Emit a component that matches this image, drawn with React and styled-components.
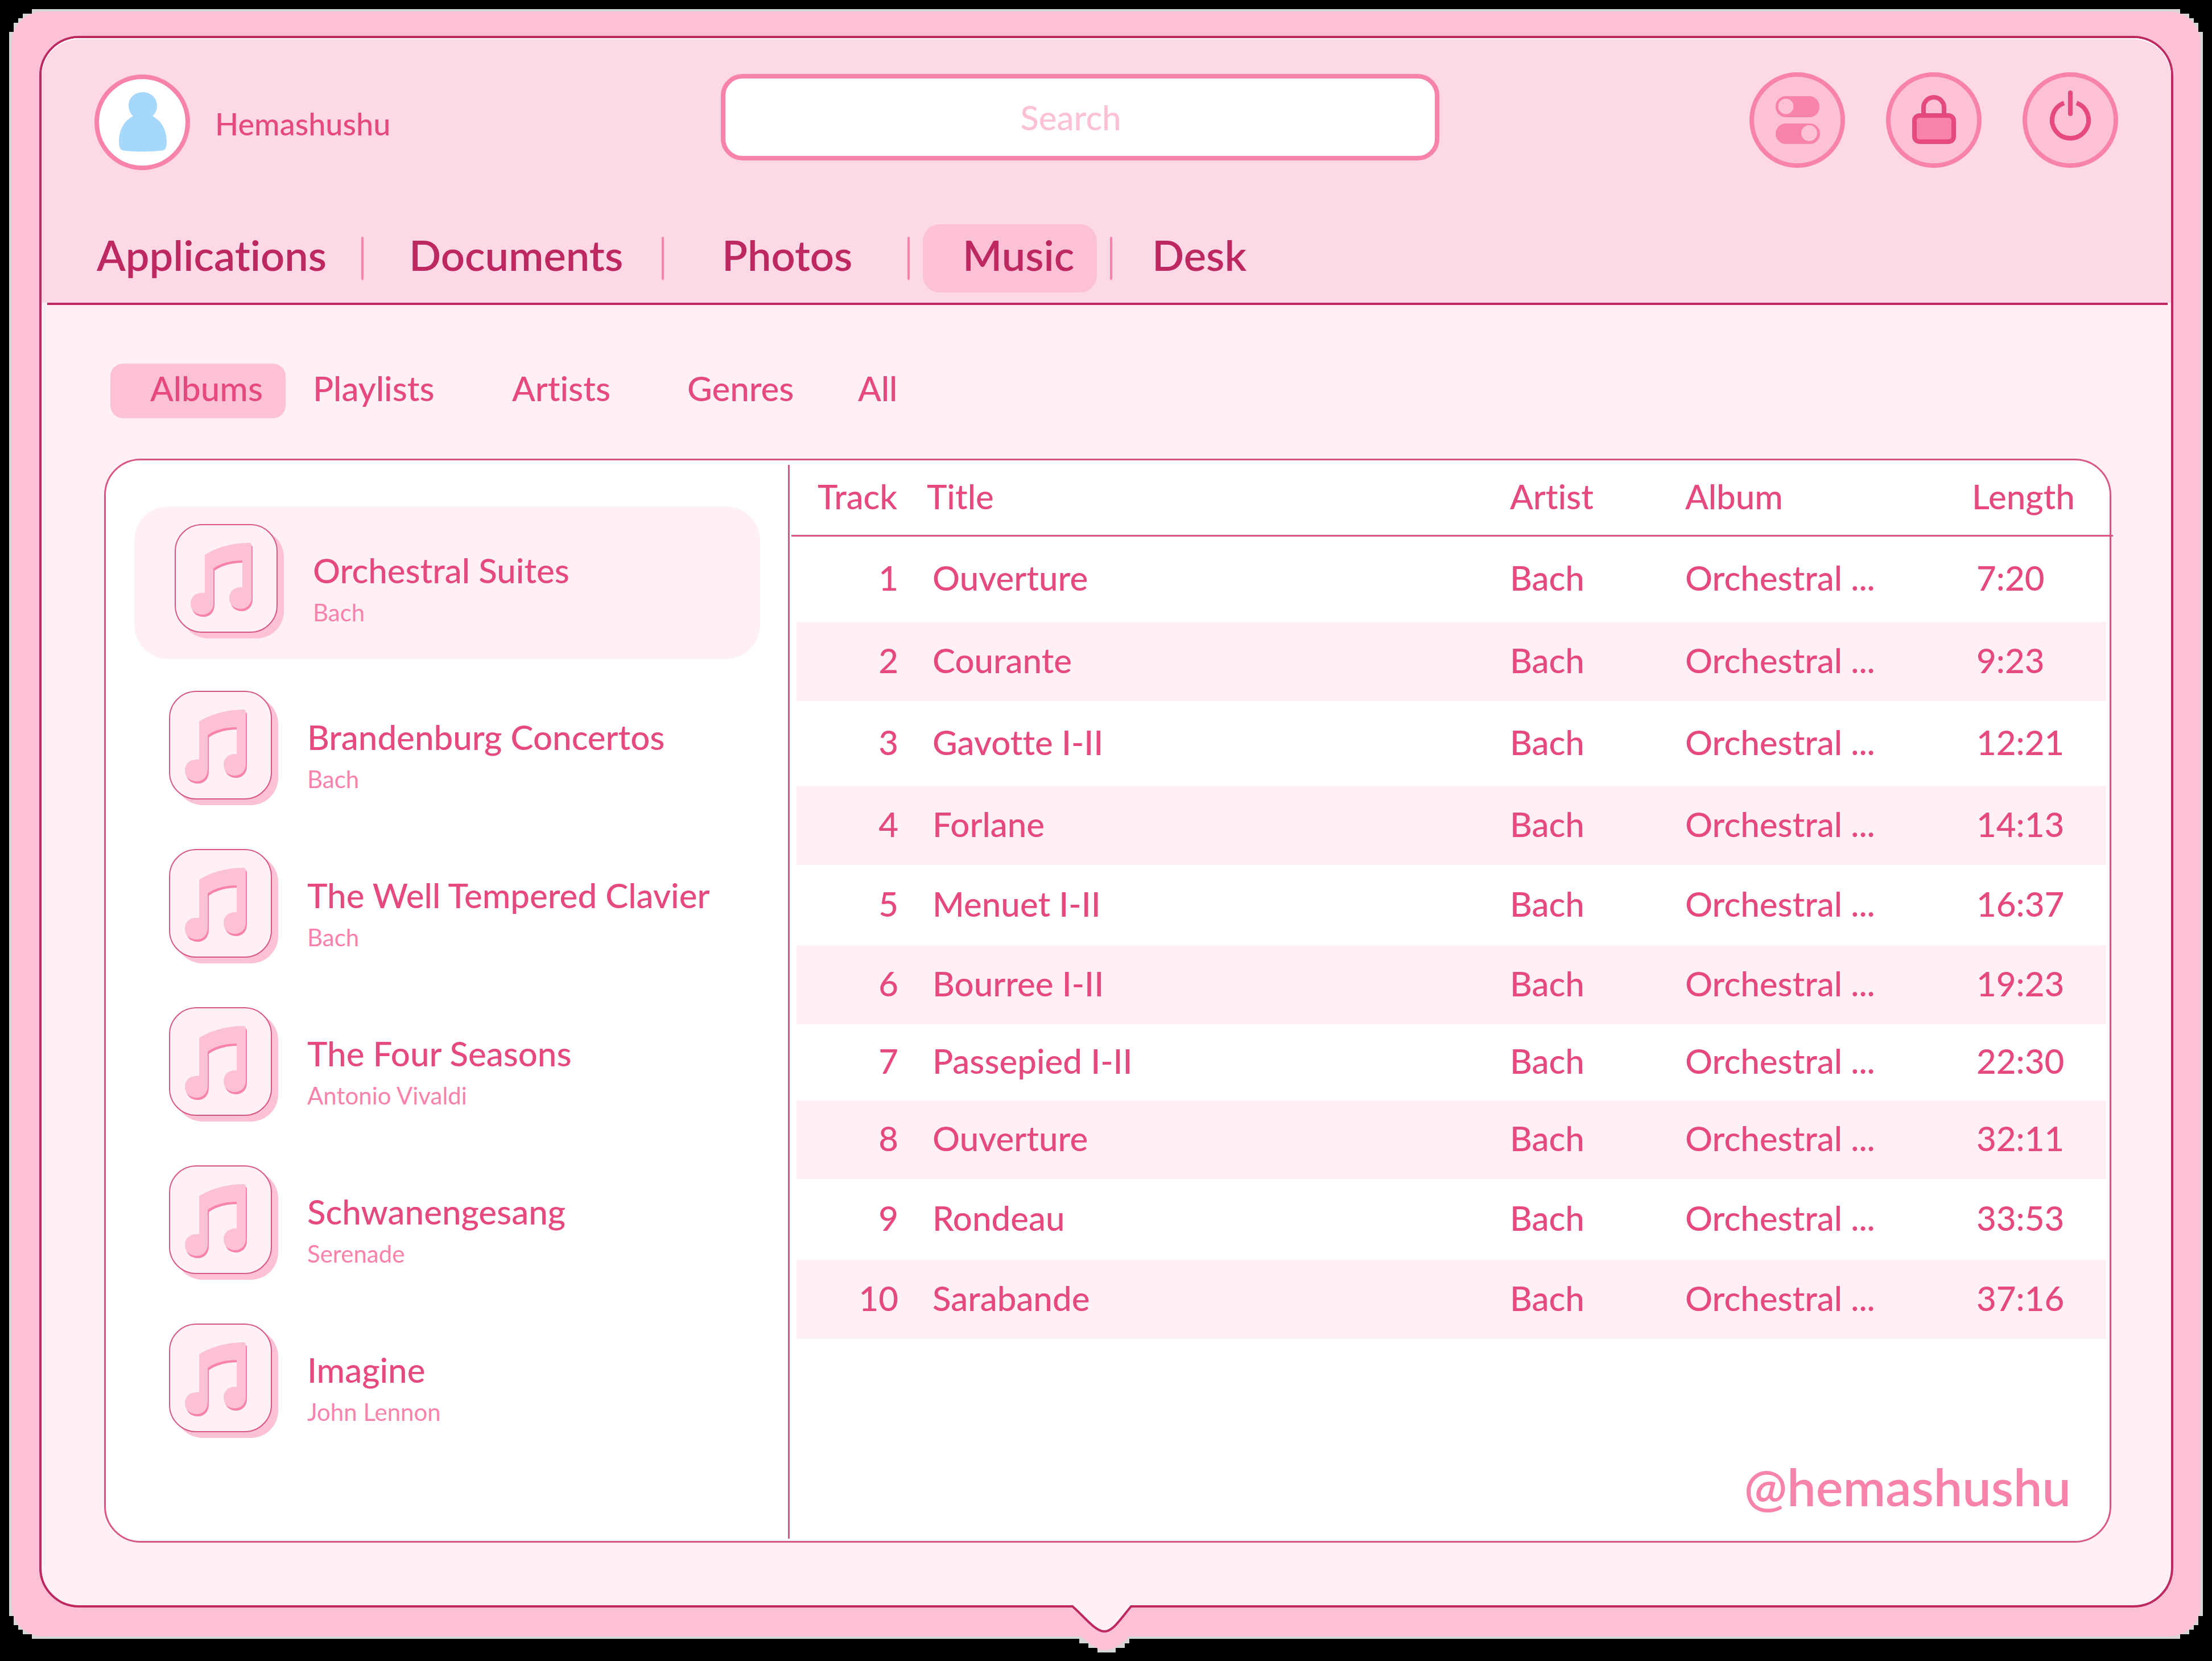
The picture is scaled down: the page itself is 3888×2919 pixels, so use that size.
import React, { useState } from "react";
import styled, { createGlobalStyle, css } from "styled-components";

const color = {
  crimson: "#bd285f",
  rose: "#e5497f",
  roseLine: "#d85585",
  pink: "#f782ab",
  blush: "#fcc1d7",
  petal: "#fdd9e7",
  mist: "#fef0f5",
  edge: "#d6d6d6",
  sky: "#a6d8fe",
};

const GlobalStyle = createGlobalStyle`
  *, *::before, *::after { box-sizing: border-box; }
  html, body { margin: 0; background: #000; }
  body {
    font-family: Lato, "Liberation Sans", sans-serif;
    font-weight: 500;
    font-variant-ligatures: none;
    color: ${color.rose};
  }
  button, input { font: inherit; font-variant-ligatures: none; color: inherit; }
  button { border: 0; padding: 0; background: none; cursor: pointer; text-align: left; }
  ul { list-style: none; margin: 0; padding: 0; }
`;

const Desktop = styled.div`
  display: flex;
  min-height: 100vh;
  padding: 16px 16px 39px;
`;

const Frame = styled.div`
  flex: 1;
  display: flex;
  background: ${color.edge};
  clip-path: polygon(
    0 40px, 8px 40px, 8px 24px, 16px 24px, 16px 16px, 24px 16px, 24px 8px, 40px 8px, 40px 0,
    calc(100% - 40px) 0, calc(100% - 40px) 8px, calc(100% - 24px) 8px, calc(100% - 24px) 16px,
    calc(100% - 16px) 16px, calc(100% - 16px) 24px, calc(100% - 8px) 24px, calc(100% - 8px) 40px, 100% 40px,
    100% calc(100% - 40px), calc(100% - 8px) calc(100% - 40px), calc(100% - 8px) calc(100% - 24px),
    calc(100% - 16px) calc(100% - 24px), calc(100% - 16px) calc(100% - 16px), calc(100% - 24px) calc(100% - 16px),
    calc(100% - 24px) calc(100% - 8px), calc(100% - 40px) calc(100% - 8px), calc(100% - 40px) 100%,
    calc(50% + 60px) 100%, calc(50% + 60px) calc(100% + 24px), calc(50% - 60px) calc(100% + 24px), calc(50% - 60px) 100%,
    40px 100%, 40px calc(100% - 8px), 24px calc(100% - 8px), 24px calc(100% - 16px), 16px calc(100% - 16px),
    16px calc(100% - 24px), 8px calc(100% - 24px), 8px calc(100% - 40px), 0 calc(100% - 40px)
  );
`;

const Mat = styled.div`
  flex: 1;
  display: flex;
  margin: 4px;
  padding: 43px 48px 51px 49px;
  border-radius: 56px;
  background: ${color.blush};
`;

const Window = styled.main`
  position: relative;
  flex: 1;
  min-width: 0;
  display: flex;
  flex-direction: column;
  border: 4px solid ${color.crimson};
  border-radius: 70px;
  background: ${color.mist};
`;

const Tail = styled.svg`
  position: absolute;
  left: 50%;
  bottom: -87px;
  width: 116px;
  height: 92px;
  margin-left: -62px;
  pointer-events: none;
`;

const Header = styled.header`
  padding: 60px 93px 18px;
  border-radius: 66px 66px 0 0;
  background: ${color.petal};
  box-shadow: inset 0 2px 0 #fff;
`;

const HeaderRule = styled.hr`
  height: 4px;
  margin: 0 6px 0 10px;
  border: 0;
  background: ${color.crimson};
`;

const TopBar = styled.div`
  display: grid;
  grid-template-columns: 1101fr 1263fr 1193fr;
  align-items: start;
`;

const Profile = styled.a`
  display: flex;
  align-items: center;
  gap: 44px;
  padding-top: 4px;
  font-size: 54px;
  line-height: 64px;
  color: inherit;
  text-decoration: none;
`;

const ProfileName = styled.span`
  padding-top: 6px;
`;

const Avatar = styled.svg`
  width: 168px;
  height: 168px;
`;

const SearchField = styled.input`
  width: 100%;
  height: 152px;
  margin-top: 3px;
  padding: 0 44px 0 36px;
  border: 8px solid ${color.pink};
  border-radius: 38px;
  background: #fff;
  outline: 0;
  text-align: center;
  font-size: 60px;
  &::placeholder { color: ${color.blush}; opacity: 1; }
`;

const Actions = styled.div`
  display: flex;
  justify-content: flex-end;
  gap: 72px;
`;

const RoundButton = styled.button`
  width: 168px;
  height: 168px;
  border: 8px solid ${color.pink};
  border-radius: 50%;
  background: ${color.blush};
  svg { display: block; width: 152px; height: 152px; }
`;

const MainNav = styled.nav`
  display: flex;
  align-items: center;
  margin-top: 95px;
`;

const NavDivider = styled.span`
  width: 4px;
  height: 76px;
  border-radius: 2px;
  background: ${color.pink};
`;

const MainTab = styled.button`
  width: ${(p) => p.$width}px;
  height: 120px;
  padding: 0 0 12px ${(p) => p.$inset}px;
  border-radius: 30px;
  font-size: 74px;
  line-height: 92px;
  font-weight: 600;
  white-space: nowrap;
  color: ${color.crimson};
  ${(p) => p.$active && css`
    margin: 0 23px;
    background: ${color.blush};
  `}
`;

const Body = styled.section`
  flex: 1;
  display: flex;
  flex-direction: column;
  padding: 103px 105px 110px 110px;
`;

const SubNav = styled.nav`
  display: flex;
  margin: 0 0 71px 11px;
`;

const SubTab = styled.button`
  width: ${(p) => p.$width}px;
  height: 96px;
  padding: 0 0 10px ${(p) => p.$inset}px;
  border-radius: 22px;
  font-size: 60px;
  line-height: 72px;
  white-space: nowrap;
  background: ${(p) => (p.$active ? color.blush : "none")};
`;

const Panel = styled.div`
  flex: 1;
  display: grid;
  grid-template-columns: 1199px 3px 1fr;
  border: 3px solid ${color.roseLine};
  border-radius: 64px;
  background: #fff;
`;

const PanelDivider = styled.div`
  margin: 8px 0 4px;
  background: ${color.roseLine};
`;

const AlbumList = styled.ul`
  display: flex;
  flex-direction: column;
  gap: 10px;
  padding: 81px 49px 60px 50px;
`;

const AlbumButton = styled.button`
  display: flex;
  align-items: flex-start;
  gap: 64px;
  width: 100%;
  height: 268px;
  padding: 31px 0 0 61px;
  border-radius: 60px;
  ${(p) => p.$active && css`
    margin-bottom: 15px;
    padding-left: 71px;
    background: ${color.mist};
  `}
`;

const Cover = styled.svg`
  flex: none;
  width: 192px;
  height: 201px;
  margin-right: -13px;
`;

const AlbumText = styled.span`
  display: flex;
  flex-direction: column;
  padding-top: 42px;
  white-space: nowrap;
`;

const AlbumTitle = styled.span`
  font-size: 60px;
  line-height: 78px;
`;

const AlbumArtist = styled.span`
  font-size: 42px;
  line-height: 70px;
  font-weight: 400;
  color: ${color.pink};
`;

const Tracks = styled.div`
  display: flex;
  flex-direction: column;
  margin: 0 -6px 0 3px;
`;

const TrackTable = styled.table`
  width: 100%;
  table-layout: fixed;
  border-collapse: separate;
  border-spacing: 0;
  font-size: 60px;
  line-height: 72px;
  text-align: left;
  white-space: nowrap;
`;

const Col = styled.col`
  width: ${(p) => (p.$width ? `${p.$width}px` : "auto")};
`;

const HeadCell = styled.th`
  height: 134px;
  padding: 0 0 6px ${(p) => p.$inset || 0}px;
  border-bottom: 3px solid ${color.roseLine};
  font-weight: 500;
`;

const TrackRow = styled.tr`
  height: ${(p) => p.$height}px;
`;

const Cell = styled.td`
  padding: 0 0 6px ${(p) => p.$inset || 0}px;
  background-clip: padding-box;
  ${TrackRow}:nth-child(even) & { background-color: ${color.mist}; }
  &:first-child {
    padding-right: 50px;
    border-left: 9px solid transparent;
    text-align: right;
  }
  &:last-child { border-right: 12px solid transparent; }
`;

const Signature = styled.a`
  margin: auto 74px 44px auto;
  font-size: 90px;
  line-height: 104px;
  font-weight: 600;
  color: ${color.pink};
  text-decoration: none;
`;

const notePath =
  "M53 54 C72 42 100 33 131 33 Q135 33 135 38 V129 C135 141 127 149 116 149 C104 149 96 141 96 130 C96 118 105 110 119 111 V64 C100 64 82 68 68 78 V138 C68 151 60 159 49 159 C36 159 28 151 28 140 C28 128 37 119 53 121 Z";

function AlbumCover() {
  return (
    <Cover viewBox="0 0 192 201" aria-hidden="true">
      <rect x="11" y="10" width="181" height="191" rx="48" fill={color.blush} />
      <rect x="1" y="1" width="179" height="189" rx="47" fill={color.mist} stroke={color.roseLine} strokeWidth="2" />
      <path d={notePath} fill={color.pink} transform="translate(2 4)" />
      <path d={notePath} fill={color.blush} />
    </Cover>
  );
}

function TogglesIcon() {
  return (
    <svg viewBox="0 0 152 152" aria-hidden="true">
      <rect x="38" y="34" width="77" height="37" rx="18" fill={color.pink} />
      <circle cx="56" cy="52" r="13.5" fill={color.blush} />
      <rect x="38" y="82" width="78" height="36" rx="18" fill={color.pink} />
      <circle cx="97" cy="99" r="14" fill={color.blush} />
    </svg>
  );
}

function LockIcon() {
  return (
    <svg viewBox="0 0 152 152" aria-hidden="true" fill="none" stroke={color.rose} strokeWidth="8">
      <path d="M58 68 V54 A18 18 0 0 1 94 54 V68" />
      <rect x="42" y="68" width="69" height="46" rx="9" fill={color.pink} />
    </svg>
  );
}

function PowerIcon() {
  return (
    <svg viewBox="0 0 152 152" aria-hidden="true" fill="none" stroke={color.rose} strokeWidth="8">
      <path d="M65 46 A32 32 0 1 0 87 46" />
      <path d="M76 28 V65" strokeLinecap="round" />
    </svg>
  );
}

const mainTabs = [
  { name: "Applications", width: 469, inset: 4 },
  { name: "Documents", width: 524, inset: 80 },
  { name: "Photos", width: 428, inset: 102 },
  { name: "Music", width: 306, inset: 70 },
  { name: "Desk", width: 260, inset: 70 },
];

const subTabs = [
  { name: "Albums", width: 308, inset: 70 },
  { name: "Playlists", width: 347, inset: 48 },
  { name: "Artists", width: 308, inset: 51 },
  { name: "Genres", width: 300, inset: 51 },
  { name: "All", width: 150, inset: 51 },
];

const albums = [
  ["Orchestral Suites", "Bach"],
  ["Brandenburg Concertos", "Bach"],
  ["The Well Tempered Clavier", "Bach"],
  ["The Four Seasons", "Antonio Vivaldi"],
  ["Schwanengesang", "Serenade"],
  ["Imagine", "John Lennon"],
];

const tracks = [
  { title: "Ouverture", length: "7:20", height: 150 },
  { title: "Courante", length: "9:23", height: 139 },
  { title: "Gavotte I-II", length: "12:21", height: 149 },
  { title: "Forlane", length: "14:13", height: 139 },
  { title: "Menuet I-II", length: "16:37", height: 141 },
  { title: "Bourree I-II", length: "19:23", height: 139 },
  { title: "Passepied I-II", length: "22:30", height: 134 },
  { title: "Ouverture", length: "32:11", height: 138 },
  { title: "Rondeau", length: "33:53", height: 142 },
  { title: "Sarabande", length: "37:16", height: 139 },
];

export default function App() {
  const [section, setSection] = useState("Music");
  const [view, setView] = useState("Albums");
  const [album, setAlbum] = useState(0);

  return (
    <>
      <GlobalStyle />
      <Desktop>
        <Frame>
          <Mat>
            <Window>
              <Header>
                <TopBar>
                  <Profile href="#profile">
                    <Avatar viewBox="0 0 168 168" aria-hidden="true">
                      <circle cx="84" cy="84" r="80" fill="#fff" stroke={color.pink} strokeWidth="8" />
                      <path
                        fill={color.sky}
                        d="M85 31 C99 31 110 41 110 54 C110 62 107 69 102 73 C118 81 127 98 127 118 C127 130 124 134 115 134 Q85 137 55 134 C46 134 43 130 43 118 C43 98 52 81 68 73 C63 69 60 62 60 54 C60 41 71 31 85 31 Z"
                      />
                    </Avatar>
                    <ProfileName>Hemashushu</ProfileName>
                  </Profile>
                  <SearchField type="search" placeholder="Search" aria-label="Search" />
                  <Actions>
                    <RoundButton type="button" aria-label="Settings"><TogglesIcon /></RoundButton>
                    <RoundButton type="button" aria-label="Lock"><LockIcon /></RoundButton>
                    <RoundButton type="button" aria-label="Power"><PowerIcon /></RoundButton>
                  </Actions>
                </TopBar>
                <MainNav aria-label="Sections">
                  {mainTabs.map((tab, i) => (
                    <React.Fragment key={tab.name}>
                      {i > 0 && <NavDivider />}
                      <MainTab
                        type="button"
                        $width={tab.width}
                        $inset={tab.inset}
                        $active={section === tab.name}
                        onClick={() => setSection(tab.name)}
                      >
                        {tab.name}
                      </MainTab>
                    </React.Fragment>
                  ))}
                </MainNav>
              </Header>
              <HeaderRule />
              <Body>
                <SubNav aria-label="Music views">
                  {subTabs.map((tab) => (
                    <SubTab
                      key={tab.name}
                      type="button"
                      $width={tab.width}
                      $inset={tab.inset}
                      $active={view === tab.name}
                      onClick={() => setView(tab.name)}
                    >
                      {tab.name}
                    </SubTab>
                  ))}
                </SubNav>
                <Panel>
                  <AlbumList>
                    {albums.map(([title, artist], i) => (
                      <li key={title}>
                        <AlbumButton type="button" $active={album === i} onClick={() => setAlbum(i)}>
                          <AlbumCover />
                          <AlbumText>
                            <AlbumTitle>{title}</AlbumTitle>
                            <AlbumArtist>{artist}</AlbumArtist>
                          </AlbumText>
                        </AlbumButton>
                      </li>
                    ))}
                  </AlbumList>
                  <PanelDivider />
                  <Tracks>
                    <TrackTable>
                      <colgroup>
                        <Col $width={238} />
                        <Col />
                        <Col $width={308} />
                        <Col $width={504} />
                        <Col $width={248} />
                      </colgroup>
                      <thead>
                        <tr>
                          <HeadCell scope="col" $inset={46}>Track</HeadCell>
                          <HeadCell scope="col">Title</HeadCell>
                          <HeadCell scope="col">Artist</HeadCell>
                          <HeadCell scope="col">Album</HeadCell>
                          <HeadCell scope="col">Length</HeadCell>
                        </tr>
                      </thead>
                      <tbody>
                        {tracks.map((track, i) => (
                          <TrackRow key={i} $height={track.height}>
                            <Cell>{i + 1}</Cell>
                            <Cell $inset={10}>{track.title}</Cell>
                            <Cell>Bach</Cell>
                            <Cell>Orchestral ...</Cell>
                            <Cell $inset={8}>{track.length}</Cell>
                          </TrackRow>
                        ))}
                      </tbody>
                    </TrackTable>
                    <Signature href="#hemashushu">@hemashushu</Signature>
                  </Tracks>
                </Panel>
              </Body>
              <Tail viewBox="0 0 116 92" aria-hidden="true">
                <path d="M14 60 V72 H30 V80 H46 V88 H78 V80 H94 V72 H102 V60 Z" fill={color.edge} shapeRendering="crispEdges" />
                <path d="M10 56 L17 60 C32 72 44 84 60 84 C74 84 90 72 102 60 L108 56 Z" fill={color.blush} />
                <path d="M2 6 C24 26 42 50 58 50 C74 50 88 26 105 6 V2 H2 Z" fill={color.mist} />
                <path d="M1 6 C24 26 42 51 58 51 C74 51 88 27 106 6" fill="none" stroke={color.crimson} strokeWidth="4" />
              </Tail>
            </Window>
          </Mat>
        </Frame>
      </Desktop>
    </>
  );
}
